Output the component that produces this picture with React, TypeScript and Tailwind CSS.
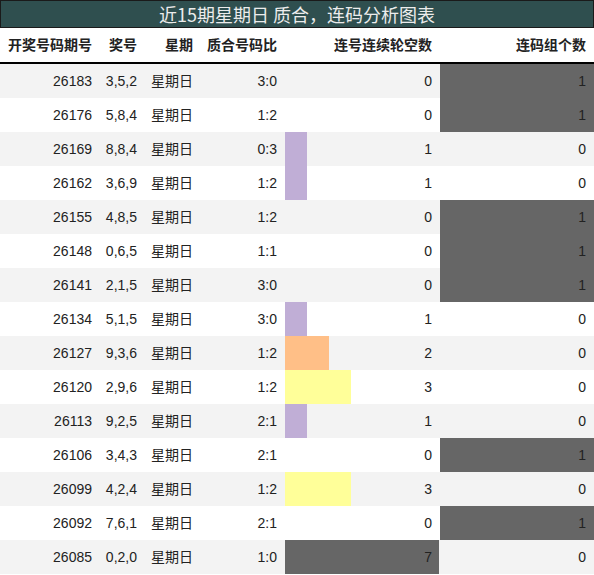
import React from "react";

type Row = {
  issue: string;
  nums: string;
  ratio: string;
  gap: number;
  groups: number;
};

const rows: Row[] = [
  { issue: "26183", nums: "3,5,2", ratio: "3:0", gap: 0, groups: 1 },
  { issue: "26176", nums: "5,8,4", ratio: "1:2", gap: 0, groups: 1 },
  { issue: "26169", nums: "8,8,4", ratio: "0:3", gap: 1, groups: 0 },
  { issue: "26162", nums: "3,6,9", ratio: "1:2", gap: 1, groups: 0 },
  { issue: "26155", nums: "4,8,5", ratio: "1:2", gap: 0, groups: 1 },
  { issue: "26148", nums: "0,6,5", ratio: "1:1", gap: 0, groups: 1 },
  { issue: "26141", nums: "2,1,5", ratio: "3:0", gap: 0, groups: 1 },
  { issue: "26134", nums: "5,1,5", ratio: "3:0", gap: 1, groups: 0 },
  { issue: "26127", nums: "9,3,6", ratio: "1:2", gap: 2, groups: 0 },
  { issue: "26120", nums: "2,9,6", ratio: "1:2", gap: 3, groups: 0 },
  { issue: "26113", nums: "9,2,5", ratio: "2:1", gap: 1, groups: 0 },
  { issue: "26106", nums: "3,4,3", ratio: "2:1", gap: 0, groups: 1 },
  { issue: "26099", nums: "4,2,4", ratio: "1:2", gap: 3, groups: 0 },
  { issue: "26092", nums: "7,6,1", ratio: "2:1", gap: 0, groups: 1 },
  { issue: "26085", nums: "0,2,0", ratio: "1:0", gap: 7, groups: 0 },
];

// bar colour by gap value
const barColor = (n: number) => {
  if (n === 1) return "bg-[#c0aed6]";
  if (n === 2) return "bg-[#ffbf87]";
  if (n === 3) return "bg-[#ffff99]";
  return "bg-[#666666]";
};

export default function App() {
  return (
    <div
      className="w-[594px] h-[575px] bg-white text-[14px] text-[#222]"
      style={{ fontFamily: '"Liberation Sans", "Noto Sans CJK SC", sans-serif' }}
    >
      <div
        className="h-[28px] bg-[#2f4f4f] border border-[#1a1a1a] flex items-center justify-center text-[18px] text-[#ececec]"
        style={{ fontFamily: '"Noto Sans CJK SC", sans-serif' }}
      >
        近15期星期日 质合，连码分析图表
      </div>

      <div className="h-[36px] flex items-center font-bold border-b-2 border-black">
        <div className="w-[100px] text-right pr-2">开奖号码期号</div>
        <div className="w-[45px] text-right pr-2">奖号</div>
        <div className="w-[56px] text-right pr-2">星期</div>
        <div className="w-[84px] text-right pr-2">质合号码比</div>
        <div className="w-[155px] text-right pr-2">连号连续轮空数</div>
        <div className="w-[154px] text-right pr-2">连码组个数</div>
      </div>

      {rows.map((r, i) => (
        <div
          key={r.issue}
          className={`h-[34px] flex ${i % 2 === 0 ? "bg-[#f3f3f3]" : "bg-white"}`}
        >
          <div className="w-[100px] flex items-center justify-end pr-2">{r.issue}</div>
          <div className="w-[45px] flex items-center justify-end pr-2">{r.nums}</div>
          <div className="w-[56px] flex items-center justify-end pr-2">星期日</div>
          <div className="w-[84px] flex items-center justify-end pr-2">{r.ratio}</div>
          <div className="w-[155px] relative flex items-center justify-end pr-2">
            {r.gap > 0 && (
              <div
                className={`absolute left-0 top-0 h-full ${barColor(r.gap)}`}
                style={{ width: Math.min(155, r.gap * 22) }}
              />
            )}
            <span className="relative">{r.gap}</span>
          </div>
          <div
            className={`w-[154px] flex items-center justify-end pr-2 ${
              r.groups > 0 ? "bg-[#666666]" : ""
            }`}
          >
            {r.groups}
          </div>
        </div>
      ))}
    </div>
  );
}
